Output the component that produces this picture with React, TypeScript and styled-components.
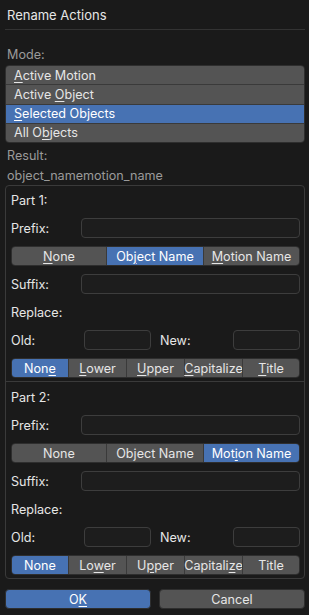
import React from "react";
import styled, { createGlobalStyle } from "styled-components";

const GlobalStyle = createGlobalStyle`
  html, body {
    margin: 0;
    padding: 0;
    background: #1a1a1a;
  }
  * {
    box-sizing: border-box;
  }
`;

const Dialog = styled.div`
  width: 309px;
  height: 615px;
  background: #1a1a1a;
  color: #e6e6e6;
  font-family: Inter, "Noto Sans", sans-serif;
  font-size: 12.6px;
  padding: 0 4px 0 5px;
  display: flex;
  flex-direction: column;
  overflow: hidden;
`;

const Title = styled.div`
  height: 30px;
  display: flex;
  align-items: center;
  padding-left: 2px;
  border-bottom: 1px solid #333;
  font-size: 13px;
`;

const Label = styled.div<{ muted?: boolean }>`
  height: 20px;
  display: flex;
  align-items: center;
  padding-left: 2px;
  color: ${({ muted }) => (muted ? "#9a9a9a" : "#e6e6e6")};
`;

const ModeLabel = styled(Label)`
  margin-top: 14px;
`;

const EnumList = styled.div`
  margin-top: 1px;
  height: 78px;
  border-radius: 4px;
  overflow: hidden;
  display: flex;
  flex-direction: column;
  border: 1px solid #2e2e2e;
`;

const EnumItem = styled.div<{ active?: boolean }>`
  flex: 1;
  display: flex;
  align-items: center;
  padding-left: 8px;
  background: ${({ active }) => (active ? "#4772b3" : "#545454")};
  color: ${({ active }) => (active ? "#ffffff" : "#e6e6e6")};
  & + & {
    border-top: 1px solid #3a3a3a;
  }
`;

const ResultLabel = styled(Label)`
  margin-top: 2px;
`;

const Box = styled.div`
  border: 1px solid #3a3a3a;
  border-radius: 4px;
  display: flex;
  flex-direction: column;
`;

const Part = styled.div`
  padding: 4px 4px 3px 5px;
  display: flex;
  flex-direction: column;
  gap: 8px;
  & + & {
    border-top: 1px solid #3a3a3a;
    padding-top: 5px;
  }
  ${Label} {
    padding-left: 0;
  }
`;

const FieldRow = styled.div`
  height: 20px;
  display: grid;
  grid-template-columns: 70px 1fr;
  align-items: center;
`;

const HalfRow = styled.div`
  height: 20px;
  display: grid;
  grid-template-columns: 73px 67px 9px 73px 67px;
  align-items: center;
`;

const RowLabel = styled.span`
  color: #e6e6e6;
`;

const Input = styled.div`
  height: 20px;
  background: #1d1d1d;
  border: 1px solid #3d3d3d;
  border-radius: 4px;
`;

const Segmented = styled.div<{ cols: string }>`
  height: 20px;
  display: grid;
  grid-template-columns: ${({ cols }) => cols};
  border-radius: 4px;
  overflow: hidden;
  border: 1px solid #2e2e2e;
`;

const Segment = styled.div<{ active?: boolean }>`
  display: flex;
  align-items: center;
  justify-content: center;
  background: ${({ active }) => (active ? "#4772b3" : "#545454")};
  color: ${({ active }) => (active ? "#ffffff" : "#e6e6e6")};
  white-space: nowrap;
  & + & {
    border-left: 1px solid #3a3a3a;
  }
`;

const Footer = styled.div`
  margin-top: 10px;
  display: grid;
  grid-template-columns: 146px 146px;
  justify-content: space-between;
`;

const Button = styled.div<{ primary?: boolean }>`
  height: 20px;
  border-radius: 4px;
  display: flex;
  align-items: center;
  justify-content: center;
  background: ${({ primary }) => (primary ? "#4772b3" : "#545454")};
  color: ${({ primary }) => (primary ? "#ffffff" : "#e6e6e6")};
  border: 1px solid #2e2e2e;
`;

const U = styled.span`
  text-decoration: underline;
  text-underline-offset: 2px;
`;

// label with one underlined access key letter at index k
const Key = ({ text, k }: { text: string; k?: number }) => {
  if (k === undefined) return <span>{text}</span>;
  return (
    <span>
      {text.slice(0, k)}
      <U>{text[k]}</U>
      {text.slice(k + 1)}
    </span>
  );
};

interface PartProps {
  title: string;
  source: number;
  sourceKeys: (number | undefined)[];
  caseKeys: (number | undefined)[];
}

const sources = ["None", "Object Name", "Motion Name"];
const cases = ["None", "Lower", "Upper", "Capitalize", "Title"];

const PartPanel = ({ title, source, sourceKeys, caseKeys }: PartProps) => (
  <Part>
    <Label>{title}</Label>
    <FieldRow>
      <RowLabel>Prefix:</RowLabel>
      <Input />
    </FieldRow>
    <Segmented cols="94px 97px 1fr">
      {sources.map((s, i) => (
        <Segment key={s} active={i === source}>
          <Key text={s} k={sourceKeys[i]} />
        </Segment>
      ))}
    </Segmented>
    <FieldRow>
      <RowLabel>Suffix:</RowLabel>
      <Input />
    </FieldRow>
    <Label>Replace:</Label>
    <HalfRow>
      <RowLabel>Old:</RowLabel>
      <Input />
      <span />
      <RowLabel>New:</RowLabel>
      <Input />
    </HalfRow>
    <Segmented cols="56px 58px 58px 58px 1fr">
      {cases.map((c, i) => (
        <Segment key={c} active={i === 0}>
          <Key text={c} k={caseKeys[i]} />
        </Segment>
      ))}
    </Segmented>
  </Part>
);

export default function App() {
  return (
    <>
      <GlobalStyle />
      <Dialog>
        <Title>Rename Actions</Title>
        <ModeLabel muted>Mode:</ModeLabel>
        <EnumList>
          <EnumItem>
            <Key text="Active Motion" k={0} />
          </EnumItem>
          <EnumItem>
            <Key text="Active Object" k={7} />
          </EnumItem>
          <EnumItem active>
            <Key text="Selected Objects" k={0} />
          </EnumItem>
          <EnumItem>
            <Key text="All Objects" k={5} />
          </EnumItem>
        </EnumList>
        <ResultLabel muted>Result:</ResultLabel>
        <Label muted>object_namemotion_name</Label>
        <Box>
          <PartPanel
            title="Part 1:"
            source={1}
            sourceKeys={[0, 2, 0]}
            caseKeys={[3, 0, 0, 0, 0]}
          />
          <PartPanel
            title="Part 2:"
            source={2}
            sourceKeys={[undefined, undefined, 3]}
            caseKeys={[undefined, 2, 1, 8, undefined]}
          />
        </Box>
        <Footer>
          <Button primary>
            <Key text="OK" k={1} />
          </Button>
          <Button>Cancel</Button>
        </Footer>
      </Dialog>
    </>
  );
}
